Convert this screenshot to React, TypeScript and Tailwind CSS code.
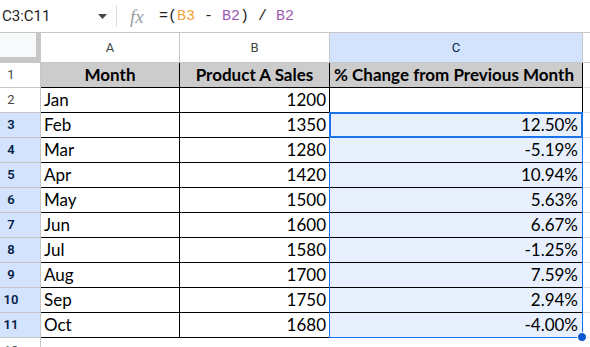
import React from "react";

const data: [string, string, string][] = [
  ["Jan", "1200", ""],
  ["Feb", "1350", "12.50%"],
  ["Mar", "1280", "-5.19%"],
  ["Apr", "1420", "10.94%"],
  ["May", "1500", "5.63%"],
  ["Jun", "1600", "6.67%"],
  ["Jul", "1580", "-1.25%"],
  ["Aug", "1700", "7.59%"],
  ["Sep", "1750", "2.94%"],
  ["Oct", "1680", "-4.00%"],
];

const cellFont = { fontFamily: "Lato, 'Open Sans', sans-serif" };

export default function App() {
  return (
    <div className="w-[590px] h-[347px] overflow-hidden bg-white relative" style={{ fontFamily: "Roboto, sans-serif" }}>
      {/* Formula bar */}
      <div className="h-[33px] flex items-center border-b border-[#c4c7c5]">
        <div className="w-[88px] pl-[2px] text-[15px] text-[#1f1f1f] leading-none">C3:C11</div>
        <div className="w-[28px] flex justify-center">
          <svg width="9" height="5" viewBox="0 0 9 5"><path d="M0 0 L9 0 L4.5 5 Z" fill="#444746" /></svg>
        </div>
        <div className="w-px h-[22px] bg-[#dadce0]" />
        <div className="w-[42px] pl-[13px] text-[19px] italic text-[#9aa0a6] leading-none" style={{ fontFamily: "'Liberation Serif', serif" }}>fx</div>
        <div className="text-[15px] leading-none text-[#1f1f1f] whitespace-pre" style={{ fontFamily: "'Liberation Mono', monospace" }}>
          =(<span className="text-[#f6a23a]">B3</span> - <span className="text-[#9c5bb3]">B2</span>) / <span className="text-[#9c5bb3]">B2</span>
        </div>
      </div>

      <div className="relative">
        {/* Column header row */}
        <div className="flex h-[30px]">
          <div className="w-[41px] shrink-0 bg-[#f8f9fa] border-r-[5px] border-b-[6px] border-[#c7c7c7]" />
          <div className="w-[139px] shrink-0 flex items-center justify-center border-r border-b border-[#c4c7c5] text-[13px] text-[#444746]">A</div>
          <div className="w-[150px] shrink-0 flex items-center justify-center border-r border-b border-[#c4c7c5] text-[13px] text-[#444746]">B</div>
          <div className="w-[253px] shrink-0 flex items-center justify-center border-r border-b border-[#c4c7c5] bg-[#d3e3fd] text-[13px] text-[#041e49]">C</div>
          <div className="flex-1 border-b border-[#c4c7c5]" />
        </div>

        {/* Row 1 */}
        <div className="flex h-[25px]">
          <div className="w-[41px] shrink-0 border-r border-b border-[#c4c7c5] text-[13px] text-[#444746] flex items-center">
            <span className="w-[22px] text-center">1</span>
          </div>
          <div className="w-[139px] shrink-0 bg-[#cccccc] border-r border-b border-black flex items-center justify-center text-[17px] font-bold text-black" style={cellFont}>Month</div>
          <div className="w-[150px] shrink-0 bg-[#cccccc] border-r border-b border-black flex items-center justify-center text-[17px] font-bold text-black" style={cellFont}>Product A Sales</div>
          <div className="w-[253px] shrink-0 bg-[#cccccc] border-r border-b border-black flex items-center justify-center pr-[4px] text-[17px] font-bold text-black whitespace-nowrap" style={cellFont}>% Change from Previous Month</div>
          <div className="flex-1 border-b border-[#e1e1e1]" />
        </div>

        {data.map((r, i) => {
          const rowNum = i + 2;
          const selected = rowNum >= 3;
          return (
            <div key={rowNum} className="flex h-[25px]">
              <div className={`w-[41px] shrink-0 border-r border-b border-[#c4c7c5] text-[13px] flex items-center ${selected ? "bg-[#d3e3fd] text-[#041e49] font-semibold" : "text-[#444746]"}`}>
                <span className="w-[22px] text-center">{rowNum}</span>
              </div>
              <div className="w-[139px] shrink-0 border-r border-b border-black flex items-center pl-[3px] text-[17px] text-black" style={cellFont}>{r[0]}</div>
              <div className="w-[150px] shrink-0 border-r border-b border-black flex items-center justify-end pr-[3px] text-[17px] text-black" style={cellFont}>{r[1]}</div>
              <div className={`w-[253px] shrink-0 border-r border-b border-black flex items-center justify-end pr-[4px] text-[17px] text-black ${selected ? "bg-[#e8f0fe]" : ""}`} style={cellFont}>{r[2]}</div>
              <div className="flex-1 border-b border-[#e1e1e1]" />
            </div>
          );
        })}

        {/* Row 12 */}
        <div className="flex h-[25px]">
          <div className="w-[41px] shrink-0 border-r border-[#c4c7c5] text-[13px] text-[#444746] flex items-center">
            <span className="w-[22px] text-center">12</span>
          </div>
        </div>

        {/* Selection overlay */}
        <div className="absolute left-[329px] top-[79px] w-[254px] h-[226px] border border-[#1a73e8] pointer-events-none" />
        <div className="absolute left-[329px] top-[79px] w-[254px] h-[26px] border-2 border-[#1a73e8] pointer-events-none" />
        <div className="absolute left-[577px] top-[299px] w-[10px] h-[10px] rounded-full bg-[#0b57d0] border border-white" />
      </div>
    </div>
  );
}
